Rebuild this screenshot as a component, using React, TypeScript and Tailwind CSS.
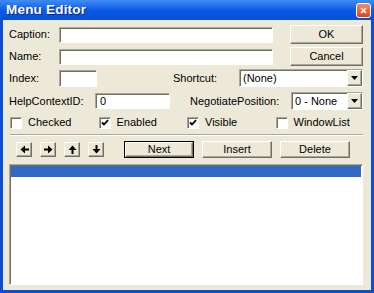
import React from 'react';

const font = { fontFamily: '"Liberation Sans", Arial, sans-serif' };

const raised =
  'border border-t-white border-l-white border-r-[#716f64] border-b-[#716f64] shadow-[inset_-1px_-1px_0_#aca899] bg-[#ece9d8]';
const sunken =
  'border border-t-[#aca899] border-l-[#aca899] border-r-white border-b-white shadow-[inset_1px_1px_0_#716f64] bg-white';

const Input: React.FC<{ className: string; value?: string }> = ({ className, value }) => (
  <div className={`${sunken} ${className} flex items-center pl-[4px] text-[11px] text-black`}>{value}</div>
);

const Button: React.FC<{ label: string; className: string; isDefault?: boolean }> = ({ label, className, isDefault }) => (
  <div className={`${className} ${isDefault ? 'border border-black' : ''} flex`}>
    <div className={`${raised} flex-1 flex items-center justify-center text-[11px] text-black`}>{label}</div>
  </div>
);

const ArrowDown = () => (
  <svg width="7" height="4" viewBox="0 0 7 4"><path d="M0 0h7L3.5 4z" fill="#000" /></svg>
);

const Select: React.FC<{ value: string; className: string }> = ({ value, className }) => (
  <div className={`${sunken} ${className} flex items-center`}>
    <span className="flex-1 pl-[3px] text-[11px] text-black">{value}</span>
    <div className={`${raised} w-[15px] h-full flex items-center justify-center`}>
      <ArrowDown />
    </div>
  </div>
);

const Check: React.FC<{ label: string; checked?: boolean }> = ({ label, checked }) => (
  <div className="w-[90px] flex items-center">
    <div className={`${sunken} w-[12px] h-[12px] flex items-center justify-center`}>
      {checked && (
        <svg width="8" height="8" viewBox="0 0 8 8">
          <path d="M1 3.5l2 2L7 1.2" stroke="#000" strokeWidth="1.8" fill="none" />
        </svg>
      )}
    </div>
    <span className="ml-[6px] text-[11px] text-black">{label}</span>
  </div>
);

const Arrow: React.FC<{ dir: 'left' | 'right' | 'up' | 'down' }> = ({ dir }) => {
  const rot = { left: 180, right: 0, up: 270, down: 90 }[dir];
  return (
    <div className={`${raised} w-[16px] h-[15px] flex items-center justify-center`}>
      <svg width="9" height="9" viewBox="0 0 9 9" style={{ transform: `rotate(${rot}deg)` }}>
        <path d="M0 3.5h4V0.5L8.5 4.5 4 8.5V5.5H0z" fill="#000" />
      </svg>
    </div>
  );
};

const App: React.FC = () => {
  return (
    <div className="w-[374px] h-[293px] flex flex-col bg-[#0a4fd8] overflow-hidden" style={font}>
      {/* Title bar */}
      <div className="h-[20px] flex items-center justify-between pl-[6px] pr-[3px] bg-gradient-to-b from-[#3f8cf6] via-[#0b5be3] to-[#0550d6]">
        <span className="text-white font-bold text-[13.5px] tracking-[0.2px] [text-shadow:1px_1px_0_#0a2a80]">Menu Editor</span>
        <div className="w-[15px] h-[15px] rounded-[3px] border border-white bg-gradient-to-b from-[#f08a6a] to-[#d8451f] flex items-center justify-center">
          <svg width="7" height="7" viewBox="0 0 7 7">
            <path d="M1 1l5 5M6 1L1 6" stroke="#fff" strokeWidth="1.6" />
          </svg>
        </div>
      </div>

      {/* Body */}
      <div className="flex-1 mx-[3px] mb-[3px] bg-[#ece9d8] pl-[6px] pr-[7px] flex flex-col">
        <div className="mt-[5px] h-[19px] flex items-center">
          <span className="w-[50px] text-[11px] text-black">Caption:</span>
          <Input className="w-[214px] h-[16px]" />
          <Button label="OK" className="ml-[17px] w-[73px] h-[19px]" />
        </div>
        <div className="mt-[3px] h-[19px] flex items-center">
          <span className="w-[50px] text-[11px] text-black">Name:</span>
          <Input className="w-[214px] h-[16px]" />
          <Button label="Cancel" className="ml-[17px] w-[73px] h-[19px]" />
        </div>
        <div className="mt-[3px] h-[18px] flex items-center">
          <span className="w-[50px] text-[11px] text-black">Index:</span>
          <Input className="w-[38px] h-[17px]" />
          <span className="ml-[76px] w-[66px] text-[11px] text-black">Shortcut:</span>
          <Select value="(None)" className="w-[124px] h-[18px]" />
        </div>
        <div className="mt-[5px] h-[18px] flex items-center">
          <span className="w-[86px] text-[11px] text-black">HelpContextID:</span>
          <Input className="w-[75px] h-[16px]" value="0" />
          <span className="ml-[20px] w-[101px] text-[11px] text-black">NegotiatePosition:</span>
          <Select value="0 - None" className="w-[72px] h-[18px]" />
        </div>
        <div className="mt-[6px] h-[13px] flex items-center pl-[1px]">
          <Check label="Checked" />
          <Check label="Enabled" checked />
          <Check label="Visible" checked />
          <Check label="WindowList" />
        </div>
        <div className="mt-[5px] ml-[1px] w-[353px] border-t border-t-[#aca899] border-b border-b-white" />
        <div className="mt-[5px] h-[17px] flex items-center">
          <div className="ml-[7px] flex gap-[8px]">
            <Arrow dir="left" />
            <Arrow dir="right" />
            <Arrow dir="up" />
            <Arrow dir="down" />
          </div>
          <div className="ml-[20px] flex gap-[8px]">
            <Button label="Next" className="w-[70px] h-[17px]" isDefault />
            <Button label="Insert" className="w-[70px] h-[17px]" />
            <Button label="Delete" className="w-[70px] h-[17px]" />
          </div>
        </div>
        <div className={`${sunken} mt-[6px] h-[121px] w-[354px] p-[1px]`}>
          <div className="h-[11px] bg-[#316ac5]" />
        </div>
      </div>
    </div>
  );
};

export default App;
